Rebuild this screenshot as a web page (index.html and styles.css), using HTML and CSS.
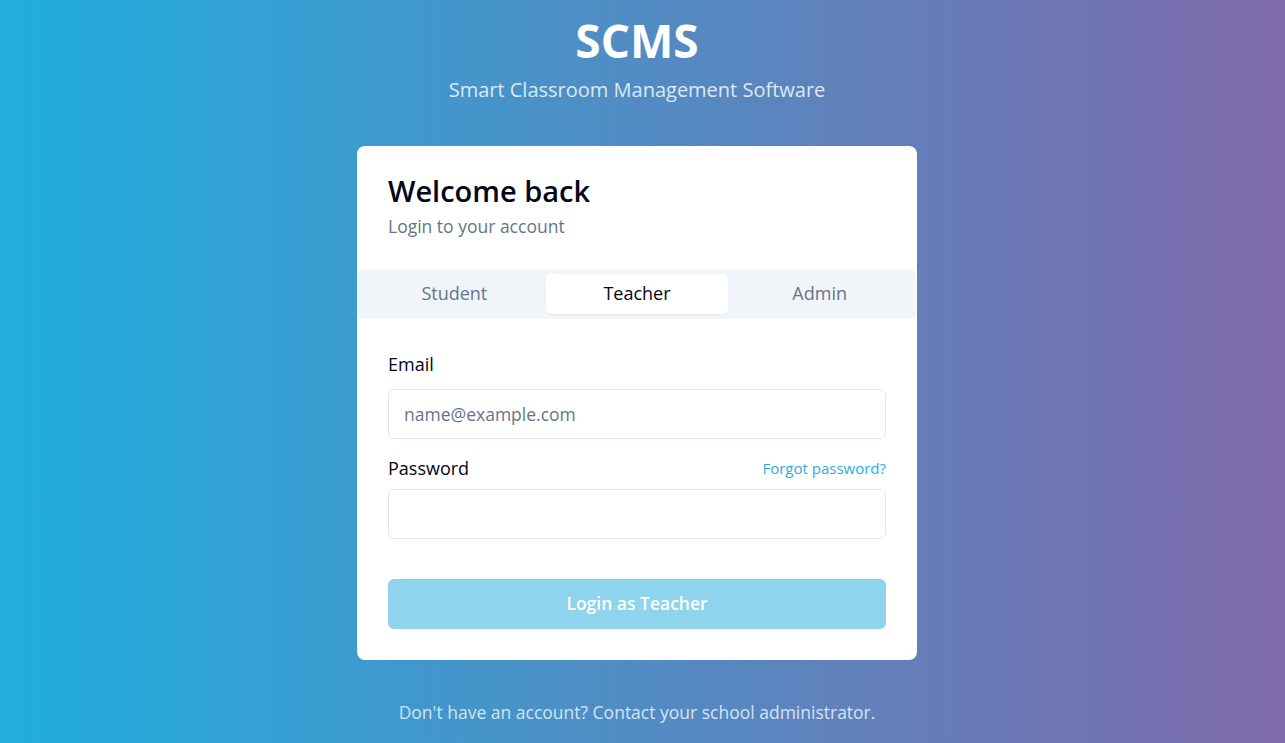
FILE: index.html
```html
<!DOCTYPE html>
<html lang="en">
<head>
<meta charset="utf-8">
<title>SCMS - Login</title>
<link rel="stylesheet" href="styles.css">
</head>
<body>
<main class="page">
  <header class="brand">
    <h1 class="brand-title">SCMS</h1>
    <p class="brand-sub">Smart Classroom Management Software</p>
  </header>
  <section class="card">
    <div class="card-head">
      <h2 class="card-title">Welcome back</h2>
      <p class="card-sub">Login to your account</p>
    </div>
    <div class="tabs">
      <button class="tab">Student</button>
      <button class="tab tab-active">Teacher</button>
      <button class="tab">Admin</button>
    </div>
    <form class="form">
      <div class="field">
        <div class="label-row"><label class="label" for="email">Email</label></div>
        <input class="input" id="email" type="email" placeholder="name@example.com">
      </div>
      <div class="field">
        <div class="label-row label-row-tight">
          <label class="label" for="pw">Password</label>
          <a class="forgot" href="#">Forgot password?</a>
        </div>
        <input class="input" id="pw" type="password">
      </div>
      <button class="submit" type="button">Login as Teacher</button>
    </form>
  </section>
  <p class="footer">Don't have an account? Contact your school administrator.</p>
</main>
</body>
</html>
```
FILE: styles.css
```css
* { box-sizing: border-box; }
html, body { margin: 0; height: 100%; }
body {
  font-family: "Open Sans", "Noto Sans", sans-serif;
  background: linear-gradient(to right, #20aede 0%, #4d8fc6 45%, #7f6aab 100%);
  color: #0b0f1a;
}
.page {
  display: flex;
  flex-direction: column;
  align-items: center;
  padding: 12px 11px 0 0;
}
.brand { text-align: center; color: #fff; }
.brand-title {
  margin: 0;
  font-size: 46px;
  font-weight: 700;
  line-height: 56px;
}
.brand-sub {
  margin: 8px 0 0;
  font-size: 20px;
  line-height: 28px;
  color: #dde8f4;
}
.card {
  margin-top: 42px;
  width: 560px;
  background: #fff;
  border-radius: 8px;
  padding: 1px 1px 31px;
}
.card-head { padding: 26px 30px 31px; }
.card-title {
  margin: 0;
  font-size: 29px;
  font-weight: 600;
  line-height: 36px;
  color: #020617;
}
.card-sub {
  margin: 5px 0 0;
  font-size: 17.5px;
  line-height: 24px;
  color: #64748b;
}
.tabs {
  display: grid;
  grid-template-columns: 1fr 1fr 1fr;
  background: #f1f4f8;
  border-radius: 6px;
  padding: 5px;
  height: 50px;
}
.tab {
  border: 0;
  background: transparent;
  font-family: inherit;
  font-size: 18px;
  color: #64748b;
  border-radius: 5px;
  padding: 0 0 2px;
  cursor: pointer;
}
.tab-active {
  background: #fff;
  color: #020617;
  box-shadow: 0 1px 2px rgba(0,0,0,0.05);
}
.form {
  padding: 31px 30px 0;
  display: flex;
  flex-direction: column;
}
.field { display: flex; flex-direction: column; margin-bottom: 15px; }
.label-row {
  display: flex;
  justify-content: space-between;
  align-items: center;
  height: 28px;
  margin-bottom: 11px;
}
.label-row-tight { margin-bottom: 7px; }
.label { font-size: 18px; color: #020617; }
.forgot { font-size: 15px; color: #2aaee0; text-decoration: none; }
.input {
  height: 50px;
  border: 1px solid #e2e8f0;
  border-radius: 6px;
  padding: 0 15px;
  font-family: inherit;
  font-size: 17.5px;
  color: #020617;
  outline: none;
}
.input::placeholder { color: #64748b; }
.submit {
  margin-top: 25px;
  height: 50px;
  border: 0;
  border-radius: 6px;
  background: #8dd4ec;
  color: #fff;
  font-family: inherit;
  font-size: 17.5px;
  font-weight: 600;
  padding: 0 0 2px;
}
.footer {
  margin: 40px 0 0;
  font-size: 17.5px;
  color: #d3e4f3;
}
```
